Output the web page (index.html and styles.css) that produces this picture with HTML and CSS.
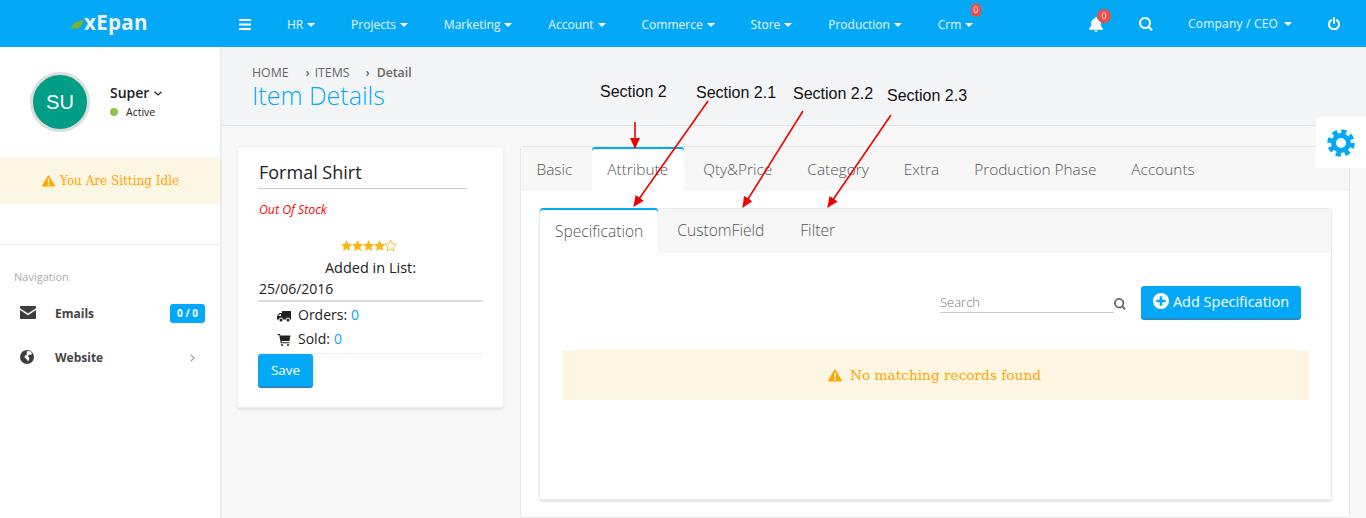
FILE: index.html

```html
<!DOCTYPE html>
<html lang="en">
<head>
    <meta charset="UTF-8">
    <meta name="viewport" content="width=device-width, initial-scale=1.0">
    <title>Item Details</title>
    <link rel="stylesheet" href="styles.css">
</head>
<body>
    <svg width="0" height="0" class="defs">
        <defs>
            <symbol id="i-warning" viewBox="0 0 16 14"><path fill-rule="evenodd" d="M8 0.3c.4 0 .7.2.9.5l6.8 11.6c.4.7-.1 1.400-.9 1.400H1.200c-.8 0-1.300-.7-.9-1.400L7.100.8c.2-.3.5-.5.9-.5zM6.900 4.200l.3 5h1.600l.3-5zM7 10.200v2h2v-2z"/></symbol>
            <symbol id="i-search" viewBox="0 0 14 14"><path fill-rule="evenodd" d="M6 0a6 6 0 0 1 4.800 9.500l3 3-1.500 1.500-3-3A6 6 0 1 1 6 0zm0 2.100a3.900 3.900 0 1 0 0 7.800 3.900 3.900 0 0 0 0-7.800z"/></symbol>
        </defs>
    </svg>

    <header class="topbar">
        <div class="logo">
            <svg class="leaf" width="13" height="10" viewBox="0 0 13 10"><path fill="#7cb32c" d="M0 9.500C.5 4 5 .8 12.500.3 12.300 5 8.500 9 3 8.600 2 8.500 1 9 0 9.500z"/></svg>
            <span>xEpan</span>
        </div>
        <nav class="mainnav">
            <svg class="bars" width="12" height="11" viewBox="0 0 12 11"><path fill="#fff" d="M0 0h12v2H0zM0 4.500h12v2H0zM0 9h12v2H0z"/></svg>
            <a class="navitem">HR<i class="caret"></i></a>
            <a class="navitem">Projects<i class="caret"></i></a>
            <a class="navitem">Marketing<i class="caret"></i></a>
            <a class="navitem">Account<i class="caret"></i></a>
            <a class="navitem">Commerce<i class="caret"></i></a>
            <a class="navitem">Store<i class="caret"></i></a>
            <a class="navitem">Production<i class="caret"></i></a>
            <a class="navitem crm">Crm<i class="caret"></i><span class="badge badge-crm">0</span></a>
        </nav>
        <div class="topright">
            <span class="bell">
                <svg width="14" height="15" viewBox="0 0 14 15"><path fill="#fff" d="M7 0c.6 0 1 .4 1 1v.4c2.400.4 3.800 2.300 3.800 4.600 0 3 .7 4.400 2.200 5.800v1H0v-1C1.500 10.400 2.200 9 2.200 6c0-2.300 1.400-4.200 3.800-4.600V1c0-.6.400-1 1-1zM5.300 13.500h3.400C8.600 14.400 7.900 15 7 15s-1.600-.6-1.700-1.500z"/></svg>
                <span class="badge badge-bell">0</span>
            </span>
            <svg class="topsearch" width="14" height="14" fill="#fff"><use href="#i-search"/></svg>
            <a class="company">Company / CEO<i class="caret"></i></a>
            <svg class="power" width="12" height="13" viewBox="0 0 12 13"><path fill="none" stroke="#fff" stroke-width="2" stroke-linecap="round" d="M6 1v5M3.200 3.200a5 5 0 1 0 5.600 0"/></svg>
        </div>
    </header>

    <div class="layout">
        <aside class="sidebar">
            <div class="profile">
                <div class="avatar">SU</div>
                <div class="who">
                    <div class="who-name">Super
                        <svg width="8" height="5" viewBox="0 0 8 5"><path fill="none" stroke="#222" stroke-width="1.200" d="M.5.700 4 4 7.500.700"/></svg>
                    </div>
                    <div class="who-status"><i class="dot"></i>Active</div>
                </div>
            </div>
            <div class="idle">
                <svg width="13" height="12" fill="#ffa500"><use href="#i-warning"/></svg>
                <span>You Are Sitting Idle</span>
            </div>
            <div class="sidenav">
                <div class="sidenav-label">Navigation</div>
                <div class="sideitem">
                    <svg class="sideicon" width="16" height="13" viewBox="0 0 16 12" preserveAspectRatio="none"><path fill="#3d3d3d" d="M0 1c0-.6.400-1 1-1h14c.6 0 1 .4 1 1v1L8 7 0 2zM0 3.600l8 5 8-5V11c0 .6-.4 1-1 1H1c-.6 0-1-.4-1-1z"/></svg>
                    <span class="sidetext">Emails</span>
                    <span class="sidebadge">0 / 0</span>
                </div>
                <div class="sideitem">
                    <svg class="sideicon" width="14" height="14" viewBox="0 0 14 14"><circle cx="7" cy="7" r="7" fill="#3d3d3d"/><path fill="#fff" d="M6.500 1.500 9.500 1l2.500 2-1 2-2-.5-1 1.500 1.500 2.500-1.500 3-1.500-2.500-2-1.500.5-2 2-1z"/></svg>
                    <span class="sidetext">Website</span>
                    <svg class="sidechev" width="5" height="8" viewBox="0 0 5 8"><path fill="none" stroke="#999" stroke-width="1.100" d="M.7.700 4 4 .7 7.300"/></svg>
                </div>
            </div>
        </aside>

        <main class="content">
            <div class="pagehead">
                <div class="crumbs">
                    <span>HOME</span>
                    <span class="crumb"><b class="sep">&rsaquo;</b>ITEMS</span>
                    <span class="crumb crumb-last"><b class="sep">&rsaquo;</b>Detail</span>
                </div>
                <h1>Item Details</h1>
            </div>

            <div class="columns">
                <section class="card">
                    <h2>Formal Shirt</h2>
                    <p class="stock">Out Of Stock</p>
                    <div class="stars">
                        <svg width="56" height="12" viewBox="0 0 56 12">
                            <defs><path id="star" d="M5.600 0l1.700 3.700 4 .5-3 2.800.8 4-3.500-2-3.500 2 .8-4-3-2.800 4-.5z"/></defs>
                            <use href="#star" fill="#fdb714"/>
                            <use href="#star" x="11" fill="#fdb714"/>
                            <use href="#star" x="22" fill="#fdb714"/>
                            <use href="#star" x="33" fill="#fdb714"/>
                            <use href="#star" x="44" fill="#fff" stroke="#fdb714" stroke-width=".9"/>
                        </svg>
                    </div>
                    <div class="added">Added in List:</div>
                    <div class="date">25/06/2016</div>
                    <div class="stat stat-first">
                        <svg width="14" height="11" viewBox="0 0 14 11"><path fill="#222" d="M5 0h9v8.500h-1a2 2 0 0 0-4 0H6a2 2 0 0 0-4 0H0V5l2.500-3H5zM3 3 1.200 5H4V3z"/><circle cx="4" cy="9" r="1.500" fill="#222"/><circle cx="11" cy="9" r="1.500" fill="#222"/></svg>
                        Orders: <a>0</a>
                    </div>
                    <div class="stat stat-last">
                        <svg width="13" height="12" viewBox="0 0 13 12"><path fill="#222" d="M0 0h2.500l.4 1.500H13l-1 5.500H4l.3 1.300H12v1H3.300L1.700 1H0z"/><circle cx="4.500" cy="11" r="1" fill="#222"/><circle cx="10.500" cy="11" r="1" fill="#222"/></svg>
                        Sold: <a>0</a>
                    </div>
                    <button class="btn btn-save">Save</button>
                </section>

                <section class="panel">
                    <div class="tabs">
                        <a class="tab">Basic</a>
                        <a class="tab active">Attribute</a>
                        <a class="tab">Qty&amp;Price</a>
                        <a class="tab">Category</a>
                        <a class="tab">Extra</a>
                        <a class="tab">Production Phase</a>
                        <a class="tab">Accounts</a>
                    </div>
                    <div class="subpanel">
                        <div class="subtabs">
                            <a class="subtab active">Specification</a>
                            <a class="subtab">CustomField</a>
                            <a class="subtab">Filter</a>
                        </div>
                        <div class="subbody">
                            <div class="toolbar">
                                <div class="search">
                                    <span class="search-input">Search</span>
                                    <svg width="12" height="12" fill="#666"><use href="#i-search"/></svg>
                                </div>
                                <button class="btn btn-add">
                                    <svg width="16" height="16" viewBox="0 0 16 16"><circle cx="8" cy="8" r="8" fill="#fff"/><path fill="#03a9f4" d="M6.700 3.300h2.600v3.400h3.400v2.600H9.300v3.400H6.700V9.300H3.300V6.700h3.400z"/></svg>
                                    Add Specification
                                </button>
                            </div>
                            <div class="norecords">
                                <svg width="14" height="13" fill="#ffa500"><use href="#i-warning"/></svg>
                                <span>No matching records found</span>
                            </div>
                        </div>
                    </div>
                </section>
            </div>
        </main>
    </div>

    <div class="settings">
        <svg width="28" height="28" viewBox="0 0 28 28">
            <circle cx="14" cy="14" r="7.500" fill="none" stroke="#03a9f4" stroke-width="5"/>
            <circle cx="14" cy="14" r="11.500" fill="none" stroke="#03a9f4" stroke-width="4.500" stroke-dasharray="5.030 4"/>
        </svg>
    </div>

    <svg class="notes" width="1366" height="518" viewBox="0 0 1366 518">
        <defs>
            <marker id="head" markerWidth="11" markerHeight="11" refX="10" refY="5" orient="auto" markerUnits="userSpaceOnUse"><path d="M0 0 11 5 0 10z" fill="#f00000"/></marker>
        </defs>
        <text x="600" y="97">Section 2</text>
        <text x="696" y="98">Section 2.1</text>
        <text x="793" y="99">Section 2.2</text>
        <text x="887" y="101">Section 2.3</text>
        <line x1="635" y1="122" x2="635" y2="148" marker-end="url(#head)"/>
        <line x1="708" y1="101" x2="634" y2="206" marker-end="url(#head)"/>
        <line x1="803" y1="111" x2="743" y2="207" marker-end="url(#head)"/>
        <line x1="891" y1="115" x2="828" y2="207" marker-end="url(#head)"/>
    </svg>
</body>
</html>
```

FILE: styles.css

```css
* {
    box-sizing: border-box;
}
html, body {
    height: 518px;
    overflow: hidden;
}
body {
    margin: 0;
    font-family: "Open Sans", sans-serif;
    background-color: #f4f5f7;
    color: #222;
    position: relative;
}
.defs {
    display: block;
    height: 0;
}

/* top bar */
.topbar {
    height: 47px;
    background-color: #03a9f7;
    display: flex;
    align-items: center;
    color: #fff;
}
.logo {
    width: 239px;
    padding-left: 71px;
    display: flex;
    align-items: center;
    font-size: 20.500px;
    font-weight: 700;
    color: #f0f0f0;
    letter-spacing: .3px;
}
.logo span {
    margin-top: -4px;
}
.leaf {
    margin-top: 3px;
}
.mainnav {
    display: flex;
    align-items: center;
    gap: 35.920px;
    margin-top: 2px;
    font-size: 12px;
    color: #eaf6fe;
}
.bars {
    display: block;
}
.navitem {
    position: relative;
    white-space: nowrap;
}
.caret {
    display: inline-block;
    margin-left: 4px;
    border-left: 4px solid transparent;
    border-right: 4px solid transparent;
    border-top: 4px solid #fff;
    vertical-align: 2px;
}
.badge {
    position: absolute;
    background-color: #e9504a;
    color: #fdd;
    font-size: 9px;
    line-height: 14px;
    text-align: center;
}
.badge-crm {
    top: -13px;
    left: 33px;
    width: 10px;
    height: 14px;
    border-radius: 5px;
}
.badge-bell {
    top: -8px;
    left: 8px;
    width: 14px;
    height: 14px;
    border-radius: 7px;
}
.topright {
    position: absolute;
    top: 0;
    left: 1089px;
    right: 0;
    height: 47px;
    display: flex;
    align-items: center;
    font-size: 12px;
}
.bell {
    position: relative;
    display: block;
    height: 15px;
    margin-top: 1px;
}
.bell svg {
    display: block;
}
.topsearch {
    margin-left: 36px;
}
.company {
    margin-left: 35px;
    margin-top: -1px;
    color: #eaf6fe;
    letter-spacing: .2px;
}
.company .caret {
    margin-left: 6px;
}
.power {
    margin-left: 36px;
}

.layout {
    display: flex;
    height: 471px;
}

/* left column */
.sidebar {
    width: 222px;
    flex: none;
    background-color: #fff;
    border-right: 2px solid #e9ecef;
}
.profile {
    display: flex;
    padding: 25px 0 0 30px;
    height: 110px;
}
.avatar {
    width: 60px;
    height: 60px;
    border-radius: 50%;
    border: 3px solid #ddd;
    background-color: #009e87;
    color: #fff;
    font-family: "Liberation Sans", sans-serif;
    font-size: 20px;
    line-height: 54px;
    text-align: center;
}
.who {
    margin-left: 20px;
    padding-top: 12px;
}
.who-name {
    font-size: 14px;
    font-weight: 600;
    line-height: 18px;
}
.who-name svg {
    vertical-align: 2px;
    margin-left: 1px;
}
.who-status {
    margin-top: 1px;
    font-size: 10.500px;
    line-height: 18px;
    display: flex;
    align-items: center;
}
.dot {
    width: 8px;
    height: 8px;
    border-radius: 50%;
    background-color: #8bc34a;
    margin-right: 8px;
}
.idle {
    height: 47px;
    padding-top: 1px;
    background-color: #fdf6e3;
    color: #ffa500;
    font-family: "DejaVu Serif", serif;
    font-size: 12px;
    display: flex;
    align-items: center;
    padding-left: 42px;
    gap: 5px;
}
.sidenav {
    margin-top: 40px;
    border-top: 1px solid #eee;
    padding-top: 24px;
}
.sidenav-label {
    padding-left: 14px;
    font-size: 11px;
    line-height: 15px;
    color: #aaa;
    margin-bottom: 16px;
}
.sideitem {
    position: relative;
    height: 44px;
    padding-left: 20px;
    display: flex;
    align-items: flex-start;
    padding-top: 5px;
    font-size: 12px;
    font-weight: 700;
    color: #444;
}
.sideicon {
    margin-top: 1px;
    flex: none;
}
.sidetext {
    position: absolute;
    left: 55px;
    top: 5px;
}
.sidebadge {
    position: absolute;
    left: 170px;
    top: 4px;
    width: 35px;
    height: 19px;
    background-color: #03a9f7;
    color: #fff;
    border-radius: 3px;
    font-size: 10px;
    line-height: 19px;
    text-align: center;
}
.sidechev {
    position: absolute;
    left: 190px;
    top: 10px;
}

/* main area */
.content {
    flex: 1;
    min-width: 0;
    background-color: #f8f8f8;
}
.pagehead {
    height: 79px;
    background-color: #f4f5f7;
    border-bottom: 1px solid #e2e4e7;
    padding: 17px 0 0 30px;
}
.crumbs {
    display: flex;
    font-size: 12.300px;
    line-height: 17px;
    color: #666;
}
.crumb {
    margin-left: 17px;
}
.crumb-last {
    margin-left: 16px;
    font-weight: 600;
}
.sep {
    margin-right: 5px;
    font-weight: 600;
}
.crumb-last .sep {
    margin-right: 7px;
}
h1 {
    margin: 1px 0 0;
    font-size: 25px;
    font-weight: 300;
    line-height: 27px;
    color: #03a9f7;
}
.columns {
    display: flex;
    align-items: flex-start;
    padding: 20px 15px 0 15px;
    gap: 16px;
}
.card {
    width: 267px;
    height: 262px;
    flex: none;
    background-color: #fff;
    border: 1px solid #eee;
    border-radius: 3px;
    box-shadow: 0 2px 2px #e2e4e8;
    padding: 12px 20px 0 20px;
    font-size: 14px;
}
h2 {
    margin: 0;
    width: 209px;
    height: 30px;
    border-bottom: 1px solid #ccc;
    font-size: 18px;
    font-weight: 400;
    line-height: 27px;
    padding-left: 1px;
}
.stock {
    margin: 12px 0 0;
    padding-left: 1px;
    font-size: 12.300px;
    font-style: italic;
    line-height: 17px;
    color: #f00;
}
.stars {
    margin-top: 19px;
    text-align: center;
    height: 14px;
    padding-right: 3px;
}
.added {
    margin-top: 6px;
    height: 21px;
    text-align: center;
    font-size: 14.500px;
    line-height: 22px;
}
.date {
    line-height: 21px;
    padding-left: 1px;
    height: 24px;
    border-bottom: 2px solid #ddd;
}
.stat {
    padding-left: 19px;
    height: 24px;
    line-height: 26px;
    display: flex;
    align-items: center;
    gap: 4px;
}
.stat svg {
    width: 14px;
    margin-right: 3px;
    margin-top: 3px;
}
.stat a {
    color: #03a9f7;
}
.stat-first {
    margin-top: 1px;
}
.stat-last {
    height: 27px;
    padding-bottom: 3px;
    border-bottom: 1px solid #eee;
}
.btn {
    border: none;
    border-bottom: 2px solid #2489c5;
    border-radius: 3px;
    background-color: #03a9f7;
    color: #fff;
    font-family: "Open Sans", sans-serif;
    font-size: 13.500px;
}
.btn-save {
    display: block;
    width: 55px;
    height: 34px;
    padding: 0;
}

.panel {
    width: 830px;
    height: 372px;
    flex: none;
    background-color: #fff;
    border: 1px solid #e8e8e8;
    border-radius: 3px;
}
.tabs, .subtabs {
    display: flex;
    background-color: #f7f7f7;
    font-weight: 300;
    color: #555;
}
.tabs {
    height: 44px;
    font-size: 15.400px;
}
.tab {
    height: 44px;
    line-height: 45px;
    padding: 0 15.500px;
    margin-right: 4px;
}
.tab:last-child {
    margin-right: 0;
}
.tab.active, .subtab.active {
    background-color: #fff;
    box-shadow: inset 0 2px 0 #03a9f7;
    border-radius: 3px 3px 0 0;
}
.subpanel {
    margin: 17px 0 0 18px;
    width: 793px;
    height: 292px;
    border: 1px solid #eaeaea;
    border-radius: 3px;
    box-shadow: 0 2px 2px #e2e4e8;
}
.subtabs {
    height: 44px;
    font-size: 15.600px;
}
.subtab {
    line-height: 42px;
    padding: 0 15px;
    margin-right: 4px;
}
.subtab.active {
    height: 45px;
    margin-top: -1px;
    line-height: 46px;
}
.subtab:last-child {
    margin-left: 2px;
}
.subbody {
    padding: 33px 22px 0 22px;
}
.toolbar {
    display: flex;
    justify-content: flex-end;
    align-items: flex-start;
    padding-right: 8px;
    gap: 15px;
}
.search {
    display: flex;
    align-items: flex-end;
    height: 27px;
}
.search-input {
    width: 174px;
    height: 27px;
    padding-top: 7px;
    border-bottom: 1px solid #ccc;
    font-size: 13px;
    font-weight: 300;
    line-height: 19px;
    color: #777;
}
.search svg {
    margin-bottom: 3px;
}
.btn-add {
    width: 160px;
    height: 34px;
    padding: 0 0 2px;
    display: flex;
    align-items: center;
    justify-content: center;
    gap: 4px;
    font-size: 14.500px;
}
.norecords {
    margin-top: 30px;
    padding-right: 2px;
    height: 50px;
    background-color: #fdf6e3;
    color: #ffa500;
    font-family: "DejaVu Serif", serif;
    font-size: 13.700px;
    display: flex;
    align-items: center;
    justify-content: center;
    gap: 8px;
}

/* these two float over the page */
.settings {
    position: absolute;
    top: 117px;
    right: 0;
    width: 50px;
    height: 51px;
    background-color: #fff;
    border-radius: 3px 0 0 3px;
    display: flex;
    align-items: center;
    justify-content: center;
}
.notes {
    position: absolute;
    top: 0;
    left: 0;
    pointer-events: none;
}
.notes text {
    font-family: "Liberation Sans", sans-serif;
    font-size: 16px;
    fill: #111;
}
.notes line {
    stroke: #f00000;
    stroke-width: 1.600;
}
```
